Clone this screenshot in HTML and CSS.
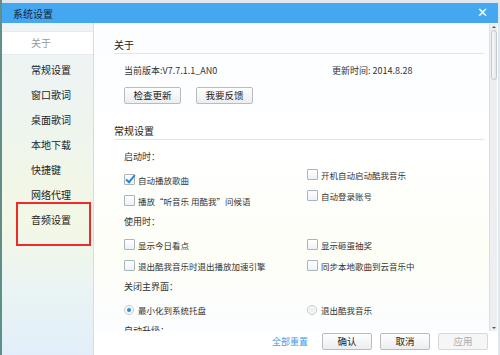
FILE: index.html
```html
<!DOCTYPE html>
<html lang="zh-CN">
<head>
  <meta charset="UTF-8">
  <title>系统设置</title>
  <link rel="stylesheet" href="styles.css">
</head>
<body>
  <div class="window">
    <div class="titlebar">
      <span class="title">系统设置</span>
      <span class="close">&#x2715;</span>
    </div>

    <div class="body">
      <!-- 左侧菜单 -->
      <ul class="menu">
        <li class="active">关于</li>
        <li>常规设置</li>
        <li>窗口歌词</li>
        <li>桌面歌词</li>
        <li>本地下载</li>
        <li>快捷键</li>
        <li>网络代理</li>
        <li>音频设置</li>
        <div class="mark"></div>
      </ul>

      <div class="main">
        <div class="scroll">
          <div class="content">
            <div class="heading">关于</div>
            <div class="info">
              <span class="col-left">当前版本:V7.7.1.1_AN0</span>
              <span>更新时间: 2014.8.28</span>
            </div>
            <div class="buttons">
              <button class="btn">检查更新</button>
              <button class="btn">我要反馈</button>
            </div>

            <div class="heading second">常规设置</div>

            <div class="label">启动时：</div>
            <div class="group">
              <div class="col col-left">
                <div class="row"><span class="box checked"></span>自动播放歌曲</div>
                <div class="row"><span class="box"></span>播放“听音乐 用酷我”问候语</div>
              </div>
              <div class="col lift">
                <div class="row"><span class="box"></span>开机自动启动酷我音乐</div>
                <div class="row"><span class="box"></span>自动登录账号</div>
              </div>
            </div>

            <div class="label">使用时：</div>
            <div class="group">
              <div class="col col-left">
                <div class="row"><span class="box"></span>显示今日看点</div>
                <div class="row"><span class="box"></span>退出酷我音乐时退出播放加速引擎</div>
              </div>
              <div class="col">
                <div class="row"><span class="box"></span>显示砸蛋抽奖</div>
                <div class="row"><span class="box"></span>同步本地歌曲到云音乐中</div>
              </div>
            </div>

            <div class="label">关闭主界面：</div>
            <div class="group">
              <div class="col col-left">
                <div class="row"><span class="radio on"></span>最小化到系统托盘</div>
              </div>
              <div class="col">
                <div class="row"><span class="radio"></span>退出酷我音乐</div>
              </div>
            </div>

            <div class="label">自动升级：</div>
          </div>

          <div class="scrollbar">
            <span class="arrow up"></span>
            <span class="thumb"></span>
            <span class="arrow down"></span>
          </div>
        </div>

        <div class="footer">
          <a class="reset">全部重置</a>
          <button class="btn wide">确认</button>
          <button class="btn wide">取消</button>
          <button class="btn wide disabled">应用</button>
        </div>
      </div>
    </div>
  </div>
</body>
</html>
```

FILE: styles.css
```css
/* Generale */
body {
  margin: 0;
  padding: 0;
  width: 500px;
  height: 355px;
  overflow: hidden;
  background: linear-gradient(to right, #5f8f86 0, #5f8f86 2px, #dfe8ee 2px);
  font-family: "Noto Sans CJK SC", "Noto Sans", sans-serif;
  color: #333;
}

.window {
  margin: 3px 0 0 2px;
  width: 496px;
  height: 352px;
  display: flex;
  flex-direction: column;
  background: #fff;
}

/* Barra del titolo */
.titlebar {
  height: 20px;
  background: #44a8f1;
  display: flex;
  align-items: center;
  justify-content: space-between;
  padding: 0 10px 0 11px;
}

.title {
  font-size: 10px;
  color: #15253a;
}

.close {
  color: #fff;
  font-size: 13px;
  font-family: "DejaVu Sans", sans-serif;
  margin-top: -2px;
}

.body {
  flex: 1;
  display: flex;
  min-height: 0;
}

/* Menu laterale */
.menu {
  position: relative;
  list-style: none;
  margin: 0;
  padding: 8px 0 0 0;
  width: 91px;
  border-right: 1px solid #d6dde2;
  background: linear-gradient(to bottom, #eef3f6 0%, #eef5ee 30%, #f3f7e4 60%, #eaf4f4 80%, #e2eefa 100%);
}

.menu li {
  height: 25px;
  line-height: 25px;
  padding-left: 29px;
  font-size: 10px;
  color: #222;
}

.menu li.active {
  background: #fff;
  color: #9a9a9a;
  border-top: 1px solid #e6ebef;
  border-bottom: 1px solid #e6ebef;
  height: 22px;
  line-height: 22px;
  margin-bottom: 2px;
}

.mark {
  position: absolute;
  left: 14px;
  top: 179px;
  width: 71px;
  height: 40px;
  border: 2px solid #ec2b2b;
}

.main {
  flex: 1;
  display: flex;
  flex-direction: column;
  margin-left: 1px;
  min-width: 0;
}

.scroll {
  height: 308px;
  display: flex;
  overflow: hidden;
  background: linear-gradient(to bottom, #fbfdff 0%, #fff 40%, #fdfef6 75%, #fbfdff 100%);
}

.content {
  flex: 1;
  padding: 13px 0 0 19px;
}

.heading {
  font-size: 10px;
  color: #222;
  line-height: 17px;
  margin-right: 5px;
  border-bottom: 1px solid #e2e4e6;
}

.heading.second {
  margin-top: 18px;
}

.info {
  display: flex;
  font-size: 9px;
  line-height: 14px;
  margin: 10px 0 0 10px;
  color: #333;
}

.col-left {
  width: 183px;
  flex: none;
}

.info .col-left {
  width: 208px;
}

.buttons {
  display: flex;
  gap: 15px;
  margin: 9px 0 0 10px;
}

.btn {
  font-family: inherit;
  font-size: 9.5px;
  color: #222;
  height: 17px;
  width: 57px;
  padding: 0;
  border: 1px solid #b9bcbf;
  border-radius: 2px;
  background: linear-gradient(to bottom, #fefefe, #ebedef);
  line-height: 15px;
}

.label {
  font-size: 9px;
  line-height: 14px;
  margin: 10px 0 0 10px;
  color: #333;
}

.group + .label {
  margin-top: 4px;
}

.group {
  display: flex;
  margin: 5px 0 0 10px;
}

.col {
  display: flex;
  flex-direction: column;
}

.col.lift {
  margin-top: -5px;
}

.row {
  height: 21px;
  display: flex;
  align-items: center;
  font-size: 8.5px;
  color: #333;
  white-space: nowrap;
}

.box {
  width: 9px;
  height: 9px;
  border: 1px solid #aab4bd;
  border-radius: 1px;
  background: linear-gradient(to bottom, #fff, #eef2f5);
  margin-right: 3px;
  position: relative;
}

.box.checked::after {
  content: "";
  position: absolute;
  left: 3px;
  top: -2px;
  width: 3px;
  height: 8px;
  border: solid #2a86d8;
  border-width: 0 2px 2px 0;
  transform: rotate(40deg);
}

.radio {
  width: 8px;
  height: 8px;
  border: 1px solid #c3c9ce;
  border-radius: 50%;
  background: radial-gradient(circle, #e8ecef 0, #fff 100%);
  margin-right: 4px;
  position: relative;
}

.radio.on::after {
  content: "";
  position: absolute;
  left: 2px;
  top: 2px;
  width: 4px;
  height: 4px;
  border-radius: 50%;
  background: #2c8ce0;
}

/* Barra di scorrimento */
.scrollbar {
  width: 7px;
  margin-right: 1px;
  margin-top: 1px;
  background: #eceef0;
  border-left: 1px solid #dde0e3;
  display: flex;
  flex-direction: column;
  align-items: center;
}

.arrow {
  width: 0;
  height: 0;
  border-left: 2px solid transparent;
  border-right: 2px solid transparent;
}

.arrow.up {
  border-bottom: 2px solid #555;
  margin-top: 2px;
}

.arrow.down {
  border-top: 2px solid #555;
  margin-top: auto;
  margin-bottom: 2px;
}

.thumb {
  width: 6px;
  height: 50px;
  margin-top: 2px;
  border: 1px solid #c6cacd;
  border-radius: 3px;
  background: linear-gradient(to right, #f7f8f9, #e4e7ea);
  box-sizing: border-box;
}

/* Piè di pagina */
.footer {
  flex: 1;
  display: flex;
  align-items: center;
  justify-content: flex-end;
  gap: 8px;
  padding: 0 10px 4px 0;
  background: #fff;
}

.reset {
  font-size: 9px;
  color: #3f9ce8;
  margin-right: 6px;
}

.btn.wide {
  width: 50px;
}

.btn.disabled {
  color: #aaa;
  border-color: #d6d8da;
  background: #f5f6f7;
}
```
